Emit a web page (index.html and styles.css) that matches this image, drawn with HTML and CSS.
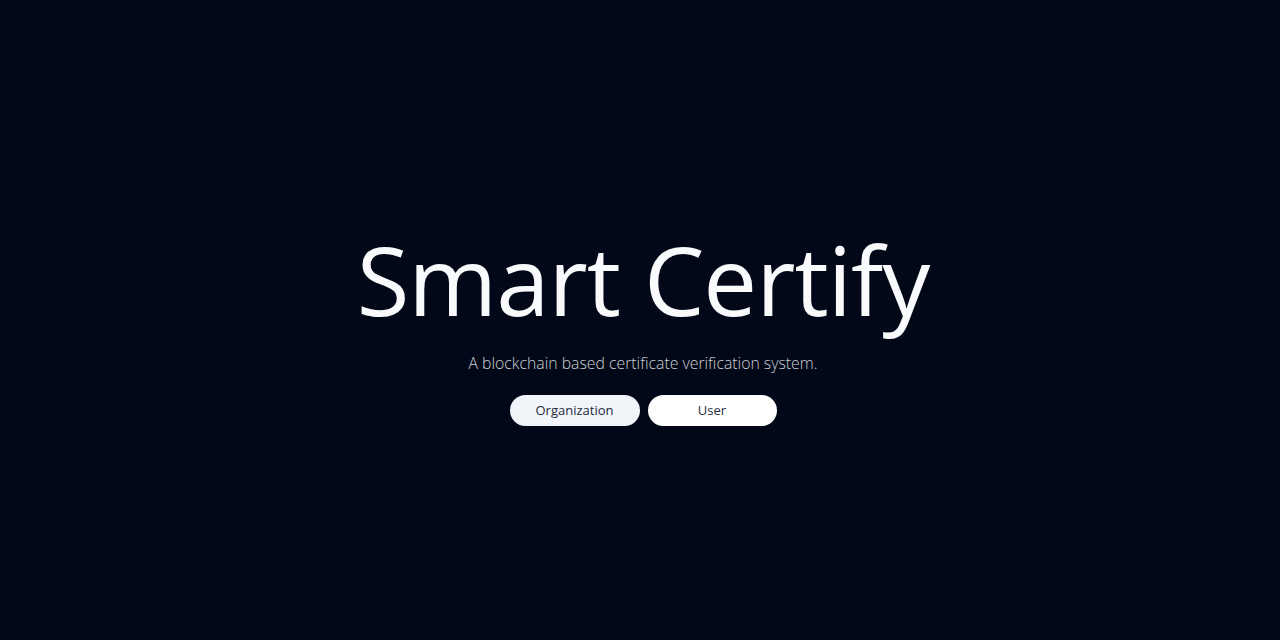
FILE: index.html
```html
<!DOCTYPE html>
<html lang="en">
<head>
<meta charset="utf-8">
<title>Smart Certify</title>
<link rel="stylesheet" href="styles.css">
</head>
<body>
<main class="hero">
  <h1 class="title">Smart Certify</h1>
  <p class="subtitle">A blockchain based certificate verification system.</p>
  <div class="actions">
    <button class="btn btn-muted">Organization</button>
    <button class="btn btn-white">User</button>
  </div>
</main>
</body>
</html>
```
FILE: styles.css
```css
html, body {
  margin: 0;
  padding: 0;
  height: 100%;
}
body {
  background: #020817;
  color: #f8fafc;
  font-family: "Open Sans", "Noto Sans", sans-serif;
}
.hero {
  box-sizing: border-box;
  height: 640px;
  padding-top: 16px;
  display: flex;
  flex-direction: column;
  align-items: center;
  justify-content: center;
}
.title {
  margin: 0 0 1px;
  padding-left: 6px;
  font-size: 96px;
  font-weight: 400;
  line-height: 1;
  letter-spacing: -1px;
}
.subtitle {
  margin: 24px 0 0;
  padding-left: 6px;
  font-size: 15.8px;
  font-weight: 300;
  color: #cdd0d6;
}
.actions {
  display: flex;
  gap: 8px;
  margin-top: 21px;
  padding-left: 6px;
}
.btn {
  height: 31px;
  width: 130px;
  border: none;
  border-radius: 999px;
  font-family: inherit;
  font-size: 13px;
  color: #1e293b;
  cursor: pointer;
}
.btn-muted { background: #f1f5f9; }
.btn-white { background: #ffffff; width: 129px; }
```
